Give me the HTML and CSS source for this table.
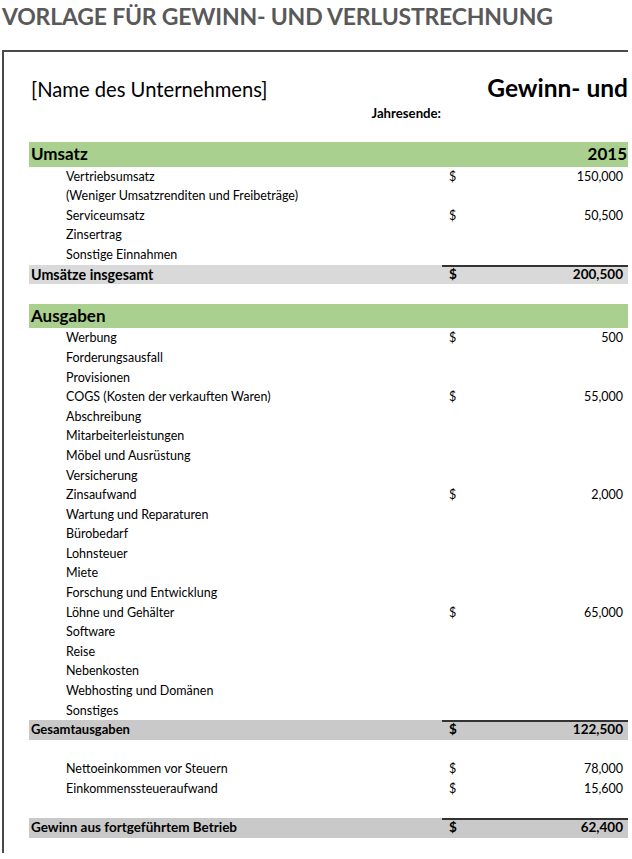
FILE: index.html
```html
<!DOCTYPE html>
<html lang="de">
<head>
<meta charset="utf-8">
<title>Vorlage für Gewinn- und Verlustrechnung</title>
<link rel="stylesheet" href="styles.css">
</head>
<body>
<h1 class="page-title">VORLAGE FÜR GEWINN- UND VERLUSTRECHNUNG</h1>
<div class="sheet">
  <div class="sheet-head">
    <div class="company">[Name des Unternehmens]</div>
    <div class="doc-title">Gewinn- und</div>
    <div class="year-end">Jahresende:</div>
    <div></div>
  </div>
  <div class="pl">
    <div class="row band"><span class="lbl">Umsatz</span><span class="cur"></span><span class="val">2015</span></div>
    <div class="row item"><span class="lbl">Vertriebsumsatz</span><span class="cur">$</span><span class="val">150,000</span></div>
    <div class="row item"><span class="lbl">(Weniger Umsatzrenditen und Freibeträge)</span><span class="cur"></span><span class="val"></span></div>
    <div class="row item"><span class="lbl">Serviceumsatz</span><span class="cur">$</span><span class="val">50,500</span></div>
    <div class="row item"><span class="lbl">Zinsertrag</span><span class="cur"></span><span class="val"></span></div>
    <div class="row item"><span class="lbl">Sonstige Einnahmen</span><span class="cur"></span><span class="val"></span></div>
    <div class="row total light"><span class="lbl">Umsätze insgesamt</span><span class="cur">$</span><span class="val">200,500</span></div>
    <div class="row spacer"></div>
    <div class="row band"><span class="lbl">Ausgaben</span><span class="cur"></span><span class="val"></span></div>
    <div class="row item"><span class="lbl">Werbung</span><span class="cur">$</span><span class="val">500</span></div>
    <div class="row item"><span class="lbl">Forderungsausfall</span><span class="cur"></span><span class="val"></span></div>
    <div class="row item"><span class="lbl">Provisionen</span><span class="cur"></span><span class="val"></span></div>
    <div class="row item"><span class="lbl">COGS (Kosten der verkauften Waren)</span><span class="cur">$</span><span class="val">55,000</span></div>
    <div class="row item"><span class="lbl">Abschreibung</span><span class="cur"></span><span class="val"></span></div>
    <div class="row item"><span class="lbl">Mitarbeiterleistungen</span><span class="cur"></span><span class="val"></span></div>
    <div class="row item"><span class="lbl">Möbel und Ausrüstung</span><span class="cur"></span><span class="val"></span></div>
    <div class="row item"><span class="lbl">Versicherung</span><span class="cur"></span><span class="val"></span></div>
    <div class="row item"><span class="lbl">Zinsaufwand</span><span class="cur">$</span><span class="val">2,000</span></div>
    <div class="row item"><span class="lbl">Wartung und Reparaturen</span><span class="cur"></span><span class="val"></span></div>
    <div class="row item"><span class="lbl">Bürobedarf</span><span class="cur"></span><span class="val"></span></div>
    <div class="row item"><span class="lbl">Lohnsteuer</span><span class="cur"></span><span class="val"></span></div>
    <div class="row item"><span class="lbl">Miete</span><span class="cur"></span><span class="val"></span></div>
    <div class="row item"><span class="lbl">Forschung und Entwicklung</span><span class="cur"></span><span class="val"></span></div>
    <div class="row item"><span class="lbl">Löhne und Gehälter</span><span class="cur">$</span><span class="val">65,000</span></div>
    <div class="row item"><span class="lbl">Software</span><span class="cur"></span><span class="val"></span></div>
    <div class="row item"><span class="lbl">Reise</span><span class="cur"></span><span class="val"></span></div>
    <div class="row item"><span class="lbl">Nebenkosten</span><span class="cur"></span><span class="val"></span></div>
    <div class="row item"><span class="lbl">Webhosting und Domänen</span><span class="cur"></span><span class="val"></span></div>
    <div class="row item"><span class="lbl">Sonstiges</span><span class="cur"></span><span class="val"></span></div>
    <div class="row total expenses"><span class="lbl">Gesamtausgaben</span><span class="cur">$</span><span class="val">122,500</span></div>
    <div class="row spacer"></div>
    <div class="row item"><span class="lbl">Nettoeinkommen vor Steuern</span><span class="cur">$</span><span class="val">78,000</span></div>
    <div class="row item"><span class="lbl">Einkommenssteueraufwand</span><span class="cur">$</span><span class="val">15,600</span></div>
    <div class="row spacer"></div>
    <div class="row total"><span class="lbl">Gewinn aus fortgeführtem Betrieb</span><span class="cur">$</span><span class="val">62,400</span></div>
  </div>
</div>
</body>
</html>
```

FILE: styles.css
```css
html, body {
  margin: 0;
  padding: 0;
  background: #ffffff;
}
body {
  font-family: Lato, "Liberation Sans", sans-serif;
  color: #000;
  width: 632px;
  height: 859px;
  overflow: hidden;
}
.page-title {
  margin: 0;
  padding: 4px 0 0 2px;
  height: 46px;
  box-sizing: border-box;
  font-size: 23px;
  line-height: 24px;
  font-weight: 700;
  color: #595959;
  letter-spacing: -0.2px;
  white-space: nowrap;
}
.sheet {
  margin-left: 2px;
  margin-top: 4px;
  width: 626px;
  box-sizing: border-box;
  border-left: 2px solid #4a4a4a;
  border-top: 2px solid #4a4a4a;
  padding: 0 0 15px 25px;
  overflow: hidden;
}
.sheet-head {
  display: grid;
  grid-template-columns: 413px 186px;
  grid-template-rows: 26px 22px;
  padding-top: 24px;
  height: 90px;
  box-sizing: border-box;
}
.company {
  padding-left: 2px;
  font-size: 20.2px;
  line-height: 26px;
  white-space: nowrap;
}
.doc-title {
  font-size: 24.5px;
  font-weight: 700;
  line-height: 24px;
  text-align: right;
  white-space: nowrap;
}
.year-end {
  font-size: 13.2px;
  font-weight: 700;
  line-height: 22px;
  text-align: right;
  padding-right: 1px;
}
.pl {
  width: 599px;
  font-size: 12.5px;
}
.row {
  display: grid;
  grid-template-columns: 413px 60px 126px;
  height: 19.6px;
  line-height: 19.6px;
  white-space: nowrap;
}
.cur { padding-left: 7px; }
.val { text-align: right; padding-right: 5px; }
.item .lbl { padding-left: 37px; }
.band {
  background: #a9d08e;
  height: 24.6px;
  line-height: 24.6px;
  font-size: 17px;
  font-weight: 700;
}
.band .lbl { padding-left: 2px; }
.band .val { padding-right: 1px; }
.total {
  background: #c9c9c9;
  font-weight: 700;
  font-size: 13.5px;
}
.total.light { background: #d9d9d9; font-size: 14.3px; }
.total.expenses { font-size: 13px; }
.total .lbl { padding-left: 2px; }
.total .cur, .total .val { box-shadow: inset 0 2px 0 #333; font-size: 13.5px; }
```
